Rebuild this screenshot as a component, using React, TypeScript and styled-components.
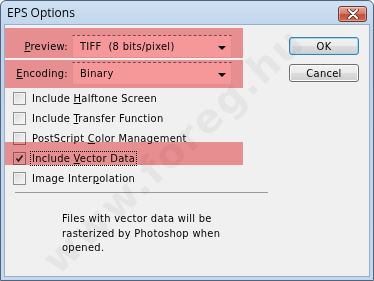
import React from "react";
import styled, { createGlobalStyle } from "styled-components";

const Global = createGlobalStyle`
  html, body { margin: 0; padding: 0; width: 374px; height: 281px; overflow: hidden; background: #fff; }
  #root { width: 374px; height: 281px; }
  * { box-sizing: border-box; }
`;

const UI_FONT = `"DejaVu Sans Condensed", "DejaVu Sans", sans-serif`;

const Window = styled.div`
  position: relative;
  width: 374px;
  height: 281px;
  display: flex;
  flex-direction: column;
  border: 1px solid #52637a;
  border-radius: 6px 6px 0 0;
  background: linear-gradient(#cfe0f3, #bed4ec 30px, #c3d8ef);
  padding: 0 3px 3px 3px;
  overflow: hidden;
  font-family: ${UI_FONT};
  font-size: 11px;
  letter-spacing: 0.3px;
  color: #000;
`;

const TitleBar = styled.div`
  height: 23px;
  display: flex;
  align-items: center;
  justify-content: space-between;
  padding: 0 3px 0 3px;
`;

const Title = styled.div`
  font-family: "Open Sans", "Noto Sans", sans-serif;
  font-size: 12px;
  letter-spacing: 0;
  color: #000;
`;

const CloseButton = styled.div`
  width: 29px;
  height: 16px;
  margin-top: 2px;
  border: 1px solid #6b3a33;
  border-radius: 3px;
  background: linear-gradient(#e9a99b, #d67d6a 45%, #c4503b 55%, #cf6a55);
  display: flex;
  align-items: center;
  justify-content: center;
  box-shadow: inset 0 0 0 1px rgba(255, 255, 255, 0.35);
`;

const Client = styled.div`
  position: relative;
  flex: 1;
  border: 1px solid #99afc8;
  background: #f0f0f0;
  display: flex;
`;

const Settings = styled.div`
  width: 270px;
  display: flex;
  flex-direction: column;
  padding-top: 10px;
`;

const Fields = styled.div`
  display: flex;
  flex-direction: column;
  gap: 4px;
`;

const FieldRow = styled.div`
  display: grid;
  grid-template-columns: 63px 160px;
  column-gap: 4px;
  align-items: center;
  height: 23px;
`;

const Label = styled.div`
  text-align: right;
  white-space: nowrap;
`;

const Combo = styled.div`
  height: 23px;
  display: flex;
  align-items: center;
  justify-content: space-between;
  padding: 0 5px 0 7px;
  background: #fff;
  border: 1px solid #ececec;
  border-top: 1px dashed #7c7c7c;
  white-space: pre;
`;

const Arrow = styled.span`
  width: 0;
  height: 0;
  border-left: 4px solid transparent;
  border-right: 4px solid transparent;
  border-top: 4px solid #000;
  margin-top: 2px;
`;

const CheckList = styled.div`
  display: flex;
  flex-direction: column;
  margin-top: 3px;
`;

const CheckRow = styled.div`
  height: 20px;
  display: flex;
  align-items: center;
  gap: 4px;
  padding-left: 8px;
`;

const Box = styled.span<{ $checked?: boolean }>`
  width: 13px;
  height: 13px;
  border: 1px solid #8f8f8f;
  background: linear-gradient(135deg, #dadada, #f7f7f7);
  box-shadow: inset 0 0 0 1px #f4f4f4;
  display: flex;
  align-items: center;
  justify-content: center;
`;

const CheckText = styled.span<{ $focus?: boolean }>`
  white-space: nowrap;
  line-height: 13px;
  padding: 0 1px;
  border: 1px dotted ${(p) => (p.$focus ? "#000" : "transparent")};
`;

const Separator = styled.div`
  margin: 4px 0 0 10px;
  width: 253px;
  height: 1px;
  background: #9a9a9a;
`;

const Note = styled.div`
  margin: 19px 0 0 57px;
  width: 180px;
  line-height: 14.5px;
`;

const Buttons = styled.div`
  display: flex;
  flex-direction: column;
  gap: 9px;
  padding: 12px 0 0 14px;
`;

const Button = styled.div<{ $default?: boolean }>`
  width: 70px;
  height: 18px;
  display: flex;
  align-items: center;
  justify-content: center;
  border-radius: 3px;
  border: 1px solid ${(p) => (p.$default ? "#3c7fb1" : "#707070")};
  background: linear-gradient(#f2f2f2, #ebebeb 50%, #dddddd 51%, #cfcfcf);
  box-shadow: inset 0 0 0 1px ${(p) => (p.$default ? "#9fd9f6" : "#fcfcfc")};
`;

const Highlight = styled.div<{ $top: number; $height: number }>`
  position: absolute;
  left: 0;
  width: 238px;
  top: ${(p) => p.$top}px;
  height: ${(p) => p.$height}px;
  background: #f6979a;
  mix-blend-mode: multiply;
  pointer-events: none;
`;

const Watermark = styled.div`
  position: absolute;
  left: 48px;
  top: 245px;
  transform: rotate(-43deg);
  transform-origin: left center;
  font-family: "DejaVu Sans", sans-serif;
  font-weight: bold;
  font-size: 40px;
  line-height: 40px;
  letter-spacing: 2px;
  color: rgba(0, 0, 0, 0.045);
  white-space: nowrap;
  pointer-events: none;
`;

const checks = [
  { pre: "Include ", key: "H", post: "alftone Screen" },
  { pre: "Include ", key: "T", post: "ransfer Function" },
  { pre: "PostScript ", key: "C", post: "olor Management" },
  { pre: "Include ", key: "V", post: "ector Data", checked: true },
  { pre: "Image Inter", key: "p", post: "olation" },
];

export default function App() {
  return (
    <>
      <Global />
      <Window>
        <TitleBar>
          <Title>EPS Options</Title>
          <CloseButton>
            <svg width="12" height="10" viewBox="0 0 12 10">
              <path d="M2 1 L10 9 M10 1 L2 9" stroke="#4a2420" strokeWidth="3.6" strokeLinecap="round" />
              <path d="M2 1 L10 9 M10 1 L2 9" stroke="#fff" strokeWidth="2" strokeLinecap="round" />
            </svg>
          </CloseButton>
        </TitleBar>
        <Client>
          <Settings>
            <Fields>
              <FieldRow>
                <Label>
                  <u>P</u>review:
                </Label>
                <Combo>
                  <span>TIFF  (8 bits/pixel)</span>
                  <Arrow />
                </Combo>
              </FieldRow>
              <FieldRow>
                <Label>
                  <u>E</u>ncoding:
                </Label>
                <Combo>
                  <span>Binary</span>
                  <Arrow />
                </Combo>
              </FieldRow>
            </Fields>
            <CheckList>
              {checks.map((c) => (
                <CheckRow key={c.post}>
                  <Box $checked={c.checked}>
                    {c.checked && (
                      <svg width="9" height="9" viewBox="0 0 9 9">
                        <path d="M1.5 4.5 L3.5 7 L7.5 1.5" fill="none" stroke="#2a2a2a" strokeWidth="1.6" />
                      </svg>
                    )}
                  </Box>
                  <CheckText $focus={c.checked}>
                    {c.pre}
                    <u>{c.key}</u>
                    {c.post}
                  </CheckText>
                </CheckRow>
              ))}
            </CheckList>
            <Separator />
            <Note>Files with vector data will be rasterized by Photoshop when opened.</Note>
          </Settings>
          <Buttons>
            <Button $default>OK</Button>
            <Button>Cancel</Button>
          </Buttons>
          <Highlight $top={3} $height={30} />
          <Highlight $top={35} $height={28} />
          <Highlight $top={117} $height={23} />
        </Client>
        <Watermark>www.foreg.hu</Watermark>
      </Window>
    </>
  );
}
